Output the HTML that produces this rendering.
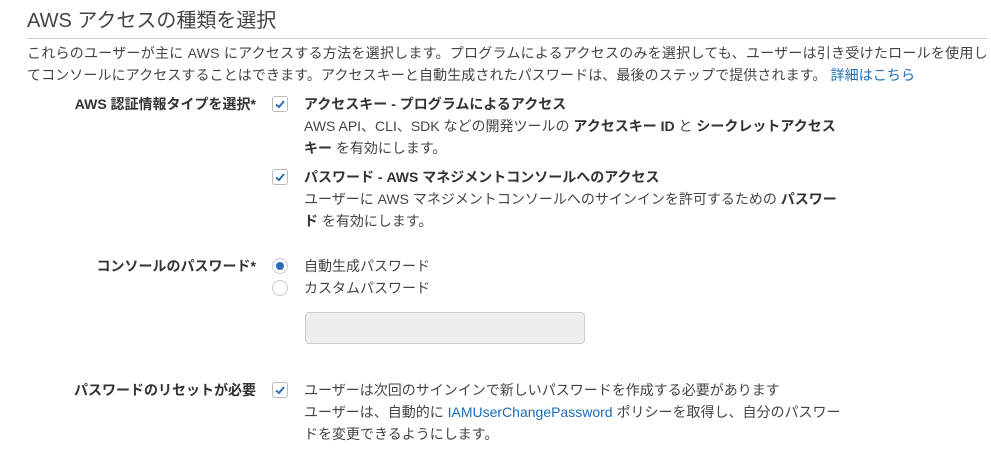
<!DOCTYPE html>
<html><head><meta charset="utf-8"><style>
body{margin:0;background:#fff;width:991px;height:449px;overflow:hidden;font-family:"Liberation Sans","Noto Sans CJK JP",sans-serif;color:#444;font-size:14px}
.a{position:absolute;white-space:nowrap;line-height:22px}
h1{position:absolute;left:27px;top:7px;margin:0;font-size:20px;font-weight:normal;color:#444;line-height:28px}
.rule{position:absolute;left:27px;top:38px;width:960px;height:1px;background:#ccc}
.lab{position:absolute;right:735px;font-weight:bold;white-space:nowrap;line-height:22px;color:#333}
.cb{position:absolute;left:272px;width:14px;height:14px;border:1px solid #bbb;border-radius:3px;background:#fff}
.cb svg{position:absolute;left:1px;top:1px}
.rd{position:absolute;left:272px;width:14px;height:14px;border:1px solid #ccc;border-radius:50%;background:#fff}
.rd.on::after{content:"";position:absolute;left:3px;top:3px;width:8px;height:8px;border-radius:50%;background:#2a6ebb}
b{color:#333}
a{color:#1a6db8;text-decoration:none}
.p{letter-spacing:0.25px}
</style></head><body>
<h1>AWS アクセスの種類を選択</h1>
<div class="rule"></div>
<div class="a p" style="left:27px;top:42px">これらのユーザーが主に AWS にアクセスする方法を選択します。プログラムによるアクセスのみを選択しても、ユーザーは引き受けたロールを使用し</div>
<div class="a" style="left:27px;top:64px;letter-spacing:0.1px">てコンソールにアクセスすることはできます。アクセスキーと自動生成されたパスワードは、最後のステップで提供されます。 <a>詳細はこちら</a></div>

<div class="lab" style="top:93px">AWS 認証情報タイプを選択*</div>
<div class="cb" style="top:96px"><svg width="12" height="12" viewBox="0 0 12 12"><path d="M2 6.5L5 9L10 3" fill="none" stroke="#2a6ebb" stroke-width="2"/></svg></div>
<div class="a" style="left:304px;top:93px"><b>アクセスキー - プログラムによるアクセス</b></div>
<div class="a" style="left:304px;top:115px">AWS API、CLI、SDK などの開発ツールの <b>アクセスキー ID</b> と <b>シークレットアクセス</b></div>
<div class="a" style="left:304px;top:137px"><b>キー</b> を有効にします。</div>

<div class="cb" style="top:169px"><svg width="12" height="12" viewBox="0 0 12 12"><path d="M2 6.5L5 9L10 3" fill="none" stroke="#2a6ebb" stroke-width="2"/></svg></div>
<div class="a" style="left:304px;top:166px"><b>パスワード - AWS マネジメントコンソールへのアクセス</b></div>
<div class="a" style="left:304px;top:188px">ユーザーに AWS マネジメントコンソールへのサインインを許可するための <b>パスワー</b></div>
<div class="a" style="left:304px;top:210px"><b>ド</b> を有効にします。</div>

<div class="lab" style="top:255px">コンソールのパスワード*</div>
<div class="rd on" style="top:258px"></div>
<div class="a" style="left:304px;top:255px">自動生成パスワード</div>
<div class="rd" style="top:280px"></div>
<div class="a" style="left:304px;top:277px">カスタムパスワード</div>
<div style="position:absolute;left:305px;top:312px;width:278px;height:30px;border:1px solid #ccc;border-radius:4px;background:#eee"></div>

<div class="lab" style="top:379px">パスワードのリセットが必要</div>
<div class="cb" style="top:382px"><svg width="12" height="12" viewBox="0 0 12 12"><path d="M2 6.5L5 9L10 3" fill="none" stroke="#2a6ebb" stroke-width="2"/></svg></div>
<div class="a" style="left:304px;top:379px">ユーザーは次回のサインインで新しいパスワードを作成する必要があります</div>
<div class="a" style="left:304px;top:401px">ユーザーは、自動的に <a>IAMUserChangePassword</a> ポリシーを取得し、自分のパスワー</div>
<div class="a" style="left:304px;top:423px">ドを変更できるようにします。</div>
</body></html>
